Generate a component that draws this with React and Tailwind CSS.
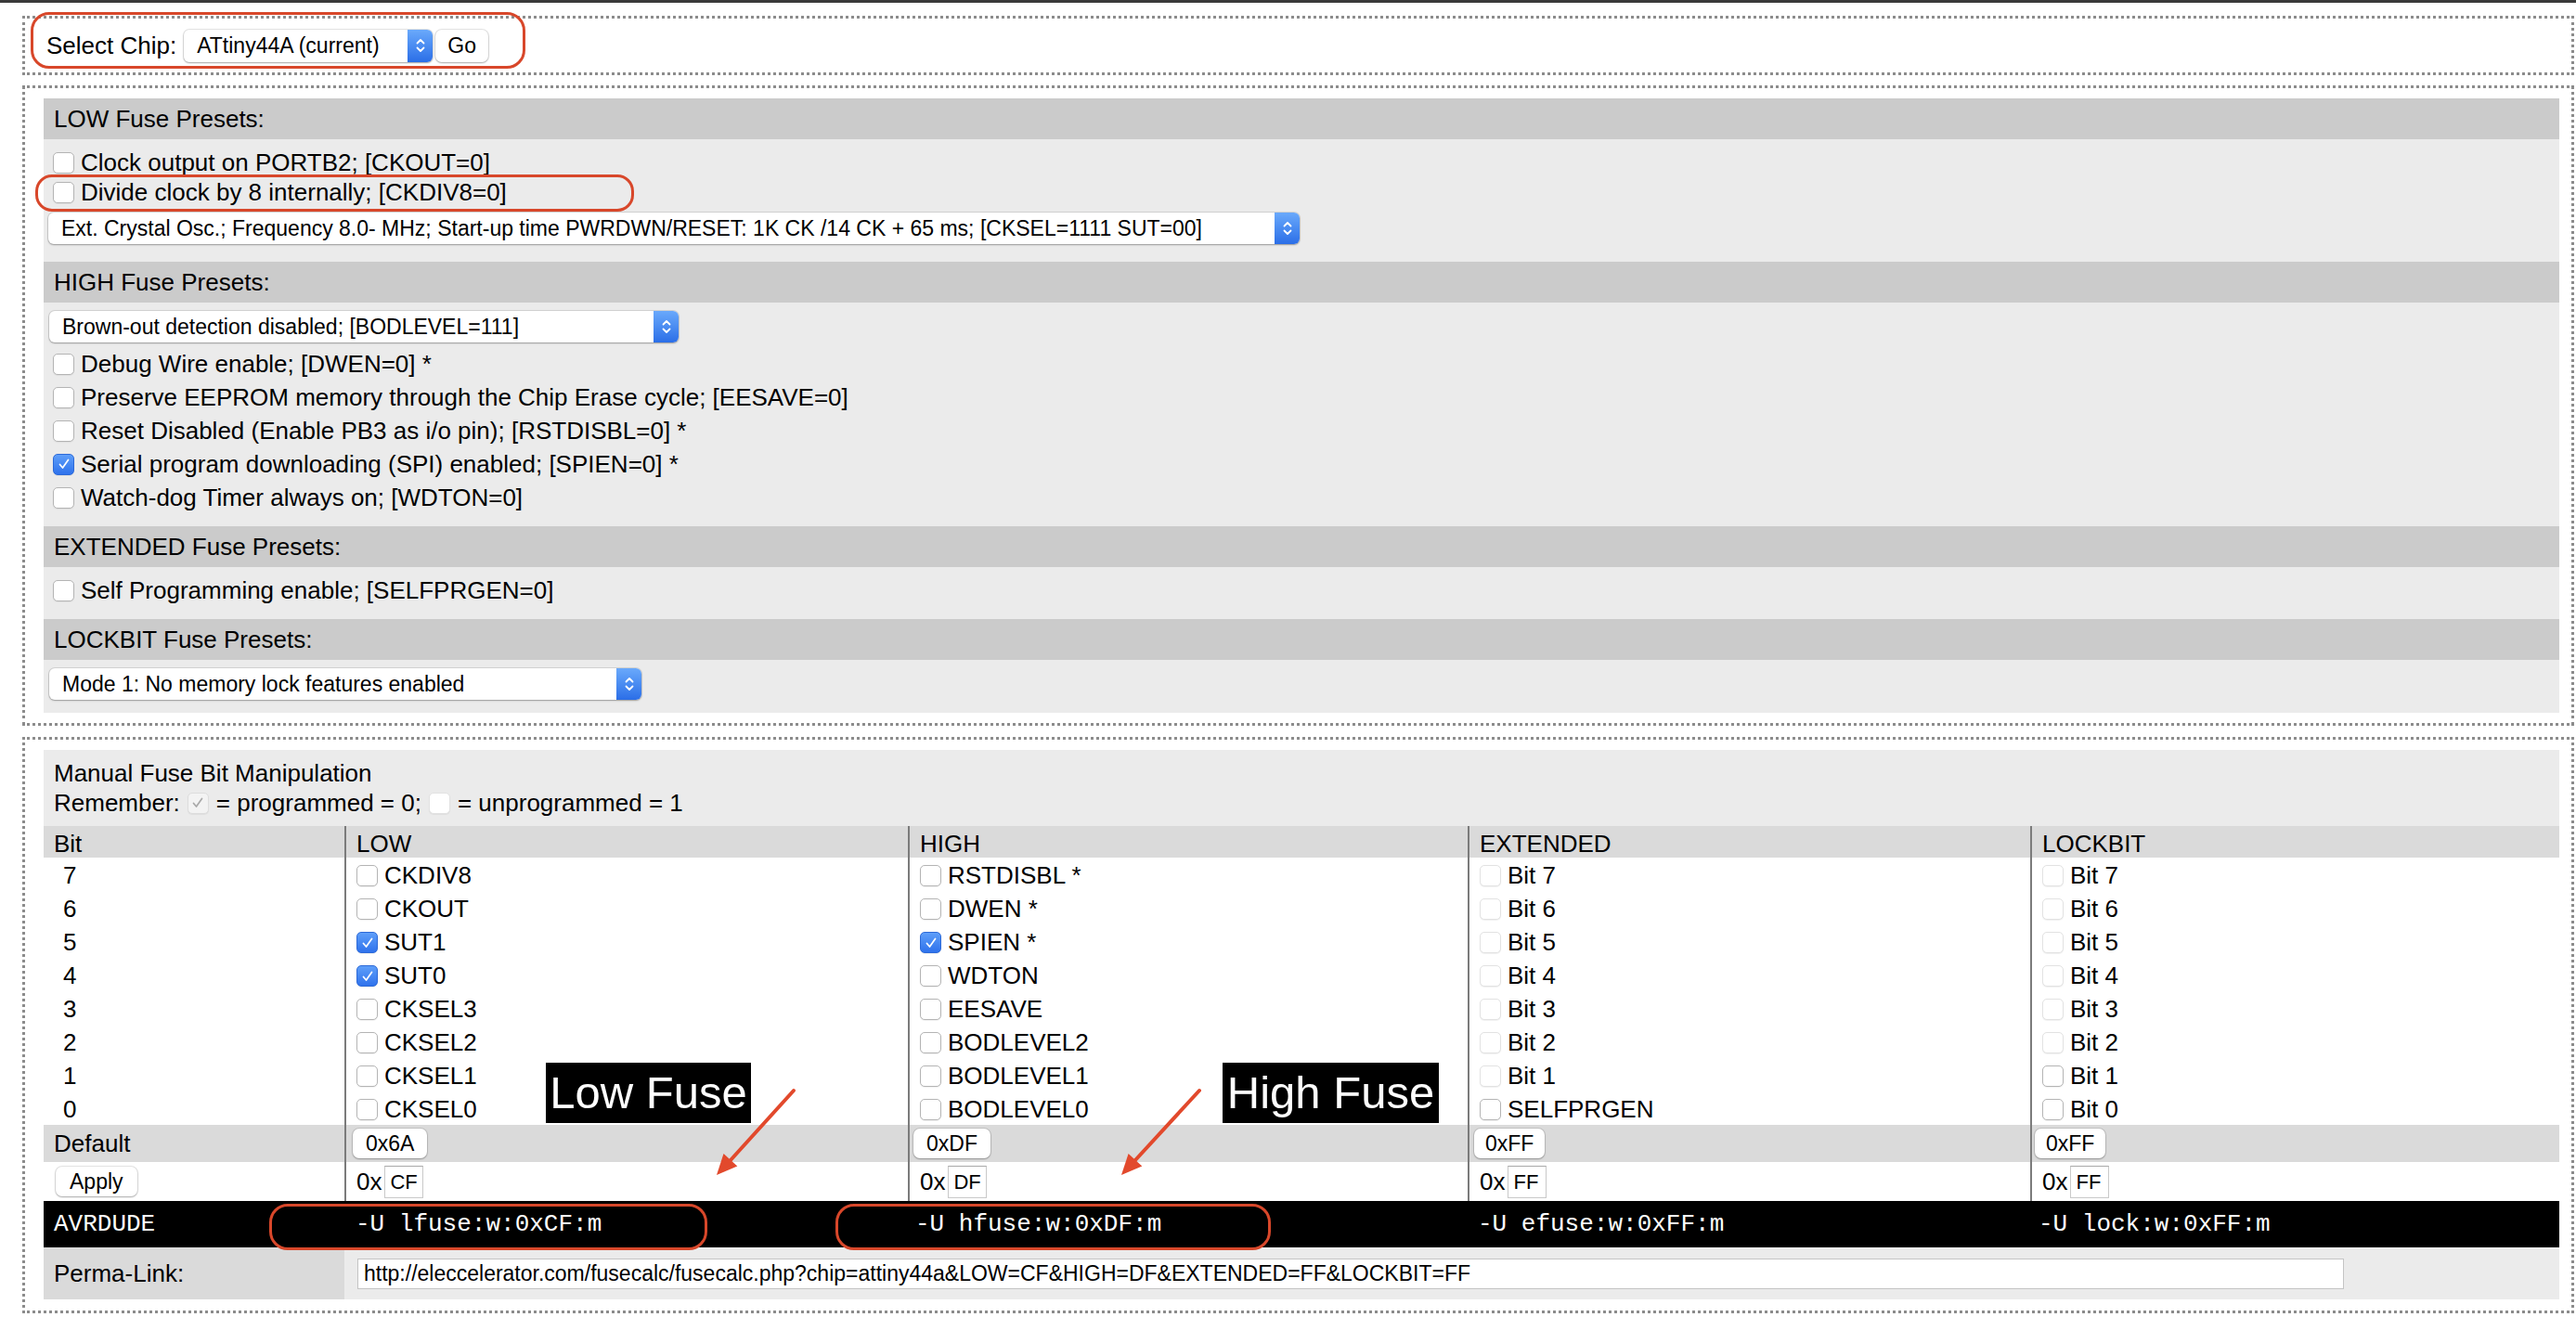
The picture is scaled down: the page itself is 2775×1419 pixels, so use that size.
import React from "react";

const lowBits = [
  ["CKDIV8", false],
  ["CKOUT", false],
  ["SUT1", true],
  ["SUT0", true],
  ["CKSEL3", false],
  ["CKSEL2", false],
  ["CKSEL1", false],
  ["CKSEL0", false],
];
const highBits = [
  ["RSTDISBL *", false],
  ["DWEN *", false],
  ["SPIEN *", true],
  ["WDTON", false],
  ["EESAVE", false],
  ["BODLEVEL2", false],
  ["BODLEVEL1", false],
  ["BODLEVEL0", false],
];
const extBits = ["Bit 7", "Bit 6", "Bit 5", "Bit 4", "Bit 3", "Bit 2", "Bit 1", "SELFPRGEN"];
const lockBits = ["Bit 7", "Bit 6", "Bit 5", "Bit 4", "Bit 3", "Bit 2", "Bit 1", "Bit 0"];

const Check = ({ checked = false, disabled = false }) => {
  let cls = "bg-white border border-[#b4b4b4]";
  if (checked && !disabled) cls = "bg-gradient-to-b from-[#5e9ef9] to-[#2f72ec] border border-[#2d6ad8]";
  if (checked && disabled) cls = "bg-[#f3f3f3] border border-[#dddddd]";
  if (!checked && disabled) cls = "bg-white border border-[#e2e2e2]";
  return (
    <span className={`inline-flex w-[23px] h-[23px] shrink-0 items-center justify-center rounded-[5px] shadow-[0_1px_1px_rgba(0,0,0,0.06)] ${cls}`}>
      {checked && (
        <svg width="16" height="16" viewBox="0 0 16 16">
          <path d="M3.5 8.5 L6.5 12 L12.5 3.5" stroke={disabled ? "#a9a9a9" : "#ffffff"} strokeWidth="1.7" fill="none" strokeLinecap="round" strokeLinejoin="round" />
        </svg>
      )}
    </span>
  );
};

const Opt = ({ label, checked, disabled, className = "" }) => (
  <div className={`flex items-center gap-[7px] ${className}`}>
    <Check checked={checked} disabled={disabled} />
    <span className="whitespace-nowrap">{label}</span>
  </div>
);

const Stepper = () => (
  <svg width="12" height="22" viewBox="0 0 12 22">
    <path d="M2.5 8.5 L6 5 L9.5 8.5 M2.5 13.5 L6 17 L9.5 13.5" stroke="#ffffff" strokeWidth="1.8" fill="none" strokeLinecap="round" strokeLinejoin="round" />
  </svg>
);

const MacSelect = ({ text, className = "" }) => (
  <div className={`flex items-stretch rounded-[6px] bg-white shadow-[0_0_0_1px_rgba(0,0,0,0.1),0_1px_2px_rgba(0,0,0,0.28)] ${className}`}>
    <span className="flex-1 flex items-center pl-[14px] text-[23px] whitespace-nowrap overflow-hidden">{text}</span>
    <span className="w-[27px] rounded-r-[6px] bg-gradient-to-b from-[#6aa9fb] to-[#2b6ee7] flex items-center justify-center">
      <Stepper />
    </span>
  </div>
);

const MacButton = ({ children, className = "" }) => (
  <div className={`inline-flex items-center justify-center rounded-[7px] bg-white text-[23px] shadow-[0_0_0_1px_rgba(0,0,0,0.1),0_1px_2px_rgba(0,0,0,0.25)] ${className}`}>
    {children}
  </div>
);

const SectionHead = ({ children }) => (
  <div className="h-[44px] bg-[#cbcbcb] flex items-center pl-[11px]">{children}</div>
);

const cols = "grid grid-cols-[324px_607px_603px_606px_1fr]";
const first = "pl-[11px] flex items-center";
const cell = "border-l-2 border-[#7b7b7b] pl-[11px] flex items-center";

const App = () => {
  return (
    <div className="relative min-h-screen bg-white text-black text-[26px] font-['Liberation_Sans',Arial,sans-serif]">
      <div className="h-[3px] bg-[#3a3a3a]" />

      <div className="pl-[24px] pr-[2px] pt-[14px]">
        {/* CHIP SELECT */}
        <div className="h-[64px] border-[3px] border-dotted border-[#8c8c8c] flex items-center pl-[23px]">
          <span className="whitespace-nowrap">Select Chip:</span>
          <MacSelect text="ATtiny44A (current)" className="ml-[8px] w-[268px] h-[35px]" />
          <MacButton className="ml-[3px] w-[57px] h-[35px]">Go</MacButton>
        </div>

        {/* PRESETS */}
        <div className="mt-[11px] border-[3px] border-dotted border-[#8c8c8c] pt-[11px] pb-[11px] pl-[20px] pr-[13px]">
          <div className="bg-[#ebebeb]">
            <SectionHead>LOW Fuse Presets:</SectionHead>
            <div className="pt-[9px] pb-[19px]">
              <Opt className="h-[32px] pl-[10px]" label="Clock output on PORTB2; [CKOUT=0]" />
              <Opt className="h-[32px] pl-[10px]" label="Divide clock by 8 internally; [CKDIV8=0]" />
              <div className="pl-[5px] mt-[6px]">
                <MacSelect
                  text="Ext. Crystal Osc.; Frequency 8.0- MHz; Start-up time PWRDWN/RESET: 1K CK /14 CK + 65 ms; [CKSEL=1111 SUT=00]"
                  className="w-[1348px] h-[34px]"
                />
              </div>
            </div>

            <SectionHead>HIGH Fuse Presets:</SectionHead>
            <div className="pt-[9px] pb-[13px]">
              <div className="pl-[6px]">
                <MacSelect text="Brown-out detection disabled; [BODLEVEL=111]" className="w-[678px] h-[34px]" />
              </div>
              <div className="mt-[5px]">
                <Opt className="h-[36px] pl-[10px]" label="Debug Wire enable; [DWEN=0] *" />
                <Opt className="h-[36px] pl-[10px]" label="Preserve EEPROM memory through the Chip Erase cycle; [EESAVE=0]" />
                <Opt className="h-[36px] pl-[10px]" label="Reset Disabled (Enable PB3 as i/o pin); [RSTDISBL=0] *" />
                <Opt className="h-[36px] pl-[10px]" checked label="Serial program downloading (SPI) enabled; [SPIEN=0] *" />
                <Opt className="h-[36px] pl-[10px]" label="Watch-dog Timer always on; [WDTON=0]" />
              </div>
            </div>

            <SectionHead>EXTENDED Fuse Presets:</SectionHead>
            <div className="pt-[7px] pb-[13px]">
              <Opt className="h-[36px] pl-[10px]" label="Self Programming enable; [SELFPRGEN=0]" />
            </div>

            <SectionHead>LOCKBIT Fuse Presets:</SectionHead>
            <div className="pt-[9px] pb-[14px] pl-[6px]">
              <MacSelect text="Mode 1: No memory lock features enabled" className="w-[638px] h-[34px]" />
            </div>
          </div>
        </div>

        {/* MANUAL */}
        <div className="mt-[12px] border-[3px] border-dotted border-[#8c8c8c] pt-[11px] pb-[12px] pl-[20px] pr-[13px]">
          <div className="bg-[#ebebeb] pt-[9px]">
            <div className="h-[32px] flex items-center pl-[11px]">Manual Fuse Bit Manipulation</div>
            <div className="h-[32px] flex items-center pl-[11px] gap-[8px] whitespace-nowrap">
              <span>Remember:</span>
              <Check checked disabled />
              <span>= programmed = 0;</span>
              <Check disabled />
              <span>= unprogrammed = 1</span>
            </div>

            <div className="mt-[9px]">
              {/* header */}
              <div className={`${cols} h-[34px] bg-[#dadada]`}>
                <div className={first}>Bit</div>
                <div className={cell}>LOW</div>
                <div className={cell}>HIGH</div>
                <div className={cell}>EXTENDED</div>
                <div className={cell}>LOCKBIT</div>
              </div>

              {/* bits */}
              {lowBits.map((lb, i) => (
                <div key={i} className={`${cols} h-[36px] bg-white`}>
                  <div className="pl-[21px] flex items-center">{7 - i}</div>
                  <div className={cell}>
                    <Opt label={lb[0]} checked={lb[1]} />
                  </div>
                  <div className={cell}>
                    <Opt label={highBits[i][0]} checked={highBits[i][1]} />
                  </div>
                  <div className={cell}>
                    <Opt label={extBits[i]} disabled={i < 7} />
                  </div>
                  <div className={cell}>
                    <Opt label={lockBits[i]} disabled={i < 6} />
                  </div>
                </div>
              ))}

              {/* default */}
              <div className={`${cols} h-[40px] bg-[#dadada]`}>
                <div className={first}>Default</div>
                <div className="border-l-2 border-[#7b7b7b] pl-[7px] flex items-center">
                  <MacButton className="h-[32px] px-[14px]">0x6A</MacButton>
                </div>
                <div className="border-l-2 border-[#7b7b7b] pl-[4px] flex items-center">
                  <MacButton className="h-[32px] px-[14px]">0xDF</MacButton>
                </div>
                <div className="border-l-2 border-[#7b7b7b] pl-[5px] flex items-center">
                  <MacButton className="h-[32px] px-[12px]">0xFF</MacButton>
                </div>
                <div className="border-l-2 border-[#7b7b7b] pl-[3px] flex items-center">
                  <MacButton className="h-[32px] px-[12px]">0xFF</MacButton>
                </div>
              </div>

              {/* apply */}
              <div className={`${cols} h-[42px] bg-white`}>
                <div className="pl-[13px] flex items-center">
                  <MacButton className="h-[32px] px-[15px]">Apply</MacButton>
                </div>
                {["CF", "DF", "FF", "FF"].map((v, i) => (
                  <div key={i} className={cell}>
                    <span>0x</span>
                    <span className="ml-[3px] w-[42px] h-[35px] bg-white border border-[#c9c9c9] border-t-[#a9a9a9] flex items-center pl-[5px] text-[22px]">
                      {v}
                    </span>
                  </div>
                ))}
              </div>

              {/* avrdude */}
              <div className={`${cols} h-[50px] bg-black text-white font-['Liberation_Mono','Courier_New',monospace] text-[26px]`}>
                <div className={first}>AVRDUDE</div>
                <div className="pl-[12px] flex items-center whitespace-nowrap">-U lfuse:w:0xCF:m</div>
                <div className="pl-[8px] flex items-center whitespace-nowrap">-U hfuse:w:0xDF:m</div>
                <div className="pl-[11px] flex items-center whitespace-nowrap">-U efuse:w:0xFF:m</div>
                <div className="pl-[9px] flex items-center whitespace-nowrap">-U lock:w:0xFF:m</div>
              </div>

              {/* permalink */}
              <div className="grid grid-cols-[324px_1fr] h-[56px]">
                <div className="bg-[#dadada] pl-[11px] flex items-center">Perma-Link:</div>
                <div className="bg-[#ebebeb] flex items-center pl-[14px]">
                  <span className="w-[2140px] h-[33px] bg-white border border-[#c4c4c4] flex items-center pl-[6px] text-[23px] whitespace-nowrap overflow-hidden">
                    http://eleccelerator.com/fusecalc/fusecalc.php?chip=attiny44a&amp;LOW=CF&amp;HIGH=DF&amp;EXTENDED=FF&amp;LOCKBIT=FF
                  </span>
                </div>
              </div>
            </div>
          </div>
        </div>
      </div>

      {/* ANNOTATIONS */}
      <div className="absolute left-[33px] top-[13px] w-[533px] h-[61px] rounded-[20px] border-[3px] border-[#d8472a] pointer-events-none" />
      <div className="absolute left-[38px] top-[188px] w-[645px] h-[40px] rounded-[18px] border-[3px] border-[#d8472a] pointer-events-none" />
      <div className="absolute left-[290px] top-[1297px] w-[472px] h-[50px] rounded-[20px] border-[3px] border-[#d8472a] pointer-events-none" />
      <div className="absolute left-[900px] top-[1297px] w-[469px] h-[50px] rounded-[20px] border-[3px] border-[#d8472a] pointer-events-none" />

      <div className="absolute left-[588px] top-[1145px] w-[221px] h-[65px] bg-black text-white text-[49px] flex items-center justify-center whitespace-nowrap">
        Low Fuse
      </div>
      <div className="absolute left-[1317px] top-[1145px] w-[233px] h-[65px] bg-black text-white text-[49px] flex items-center justify-center whitespace-nowrap">
        High Fuse
      </div>

      <svg className="absolute left-0 top-0 pointer-events-none" width="2775" height="1419">
        <line x1="855" y1="1175" x2="787" y2="1250" stroke="#e2492c" strokeWidth="4" strokeLinecap="round" />
        <polygon points="772,1266 794.3,1256.5 779.5,1243" fill="#e2492c" />
        <line x1="1292" y1="1175" x2="1223" y2="1250" stroke="#e2492c" strokeWidth="4" strokeLinecap="round" />
        <polygon points="1208,1266 1230.3,1256.6 1215.6,1243" fill="#e2492c" />
      </svg>
    </div>
  );
};

export default App;
